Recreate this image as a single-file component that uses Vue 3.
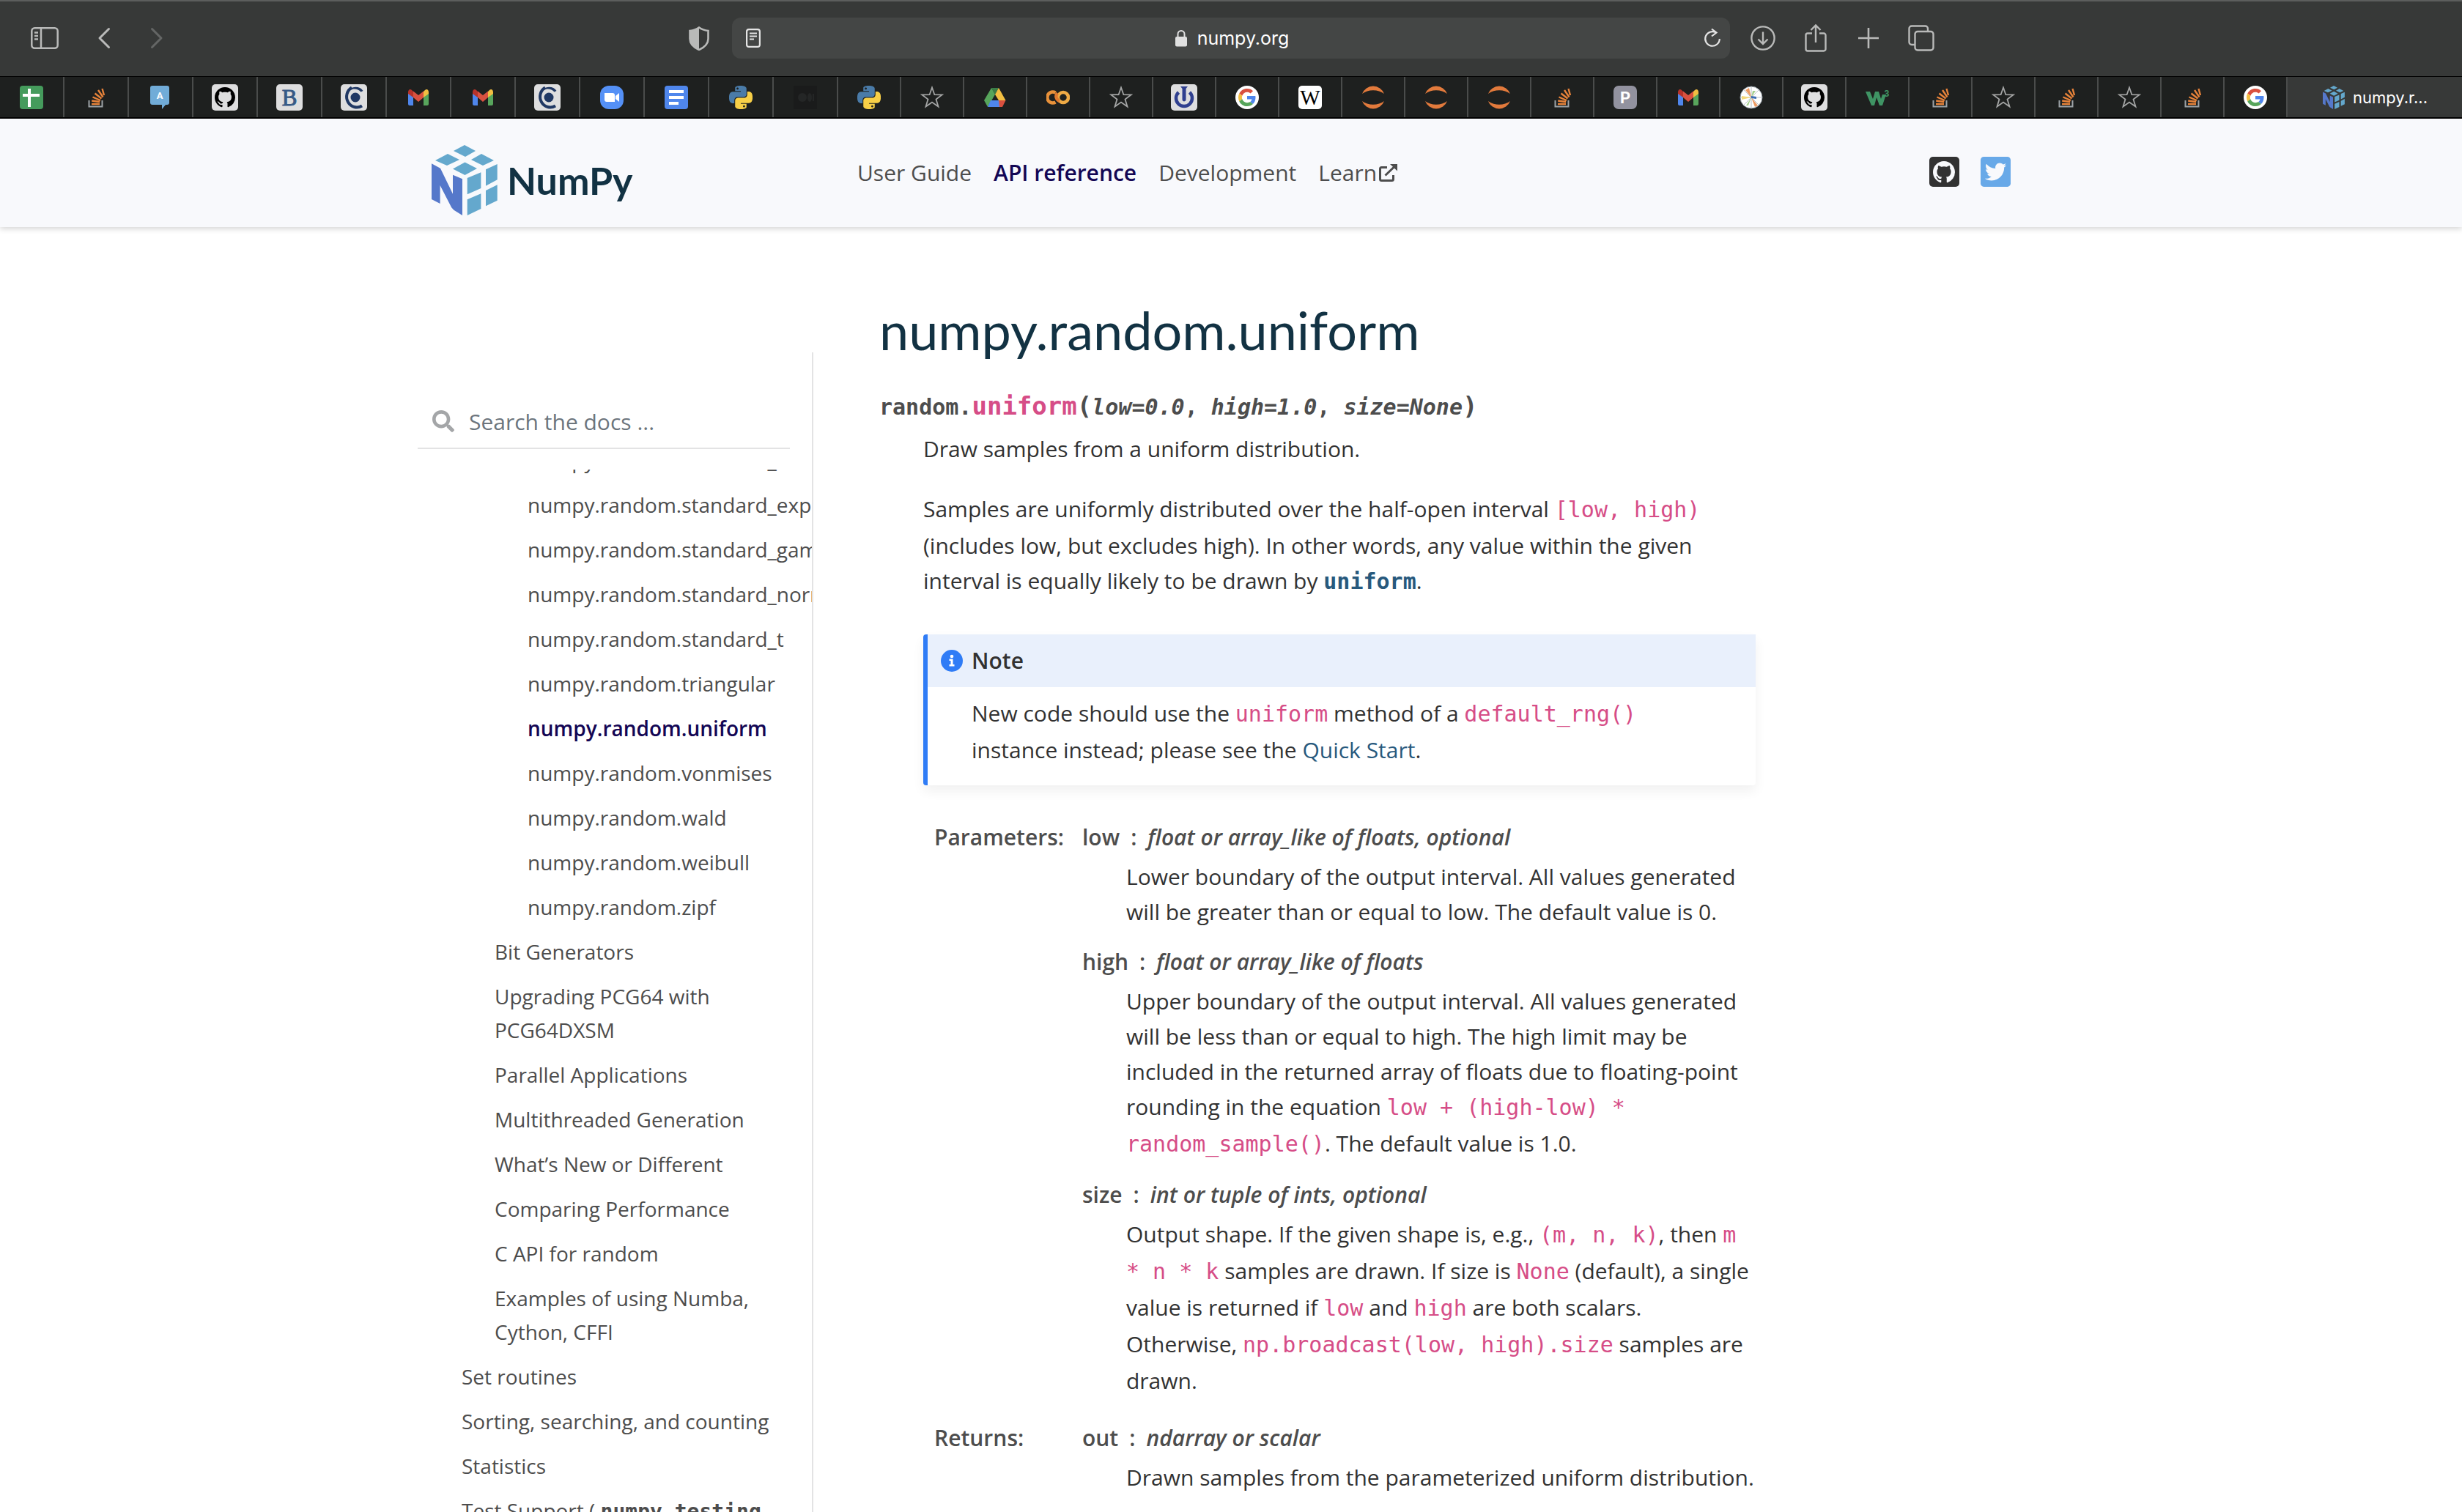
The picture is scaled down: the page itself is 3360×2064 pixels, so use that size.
<script setup>
import { ref } from 'vue'

const search = ref('')

const wideTabs = ['sheets', 'stack', 'chat', 'github', 'b', 'co', 'gmail', 'gmail', 'co', 'zoom', 'docs', 'python', 'dim']
const narrowTabs = [
  'python', 'star', 'drive', 'colab', 'star', 'power', 'google', 'wiki', 'jupyter', 'jupyter', 'jupyter', 'stack',
  'p', 'gmail', 'mpl', 'github', 'w3', 'stack', 'star', 'stack', 'star', 'stack', 'google',
]

const functions = [
  'standard_cauchy', 'standard_exponential', 'standard_gamma', 'standard_normal', 'standard_t', 'triangular',
  'uniform', 'vonmises', 'wald', 'weibull', 'zipf',
]
const randomPages = [
  'Bit Generators', 'Upgrading PCG64 with PCG64DXSM', 'Parallel Applications', 'Multithreaded Generation',
  'What’s New or Different', 'Comparing Performance', 'C API for random', 'Examples of using Numba, Cython, CFFI',
]
const routines = ['Set routines', 'Sorting, searching, and counting', 'Statistics']
</script>

<template>
  <div class="window">
    <svg class="sprite" aria-hidden="true">
      <symbol id="sheets" viewBox="0 0 32 32"><rect width="32" height="32" rx="4" fill="#459b5c" /><path d="M11 4h4v7h12v4H15v14h-4V15H4v-4h7z" fill="#fff" /></symbol>
      <symbol id="stack" viewBox="0 0 32 32"><path d="M6.500 20v8.500h18V20" fill="none" stroke="#9da3a8" stroke-width="2" /><path d="M10 25h11M10.200 20.500l11 1.500M11.500 15.500l10.500 4.500M14.500 10.500l9 7M19 6l6.500 9.500M24.500 4l2.500 9" fill="none" stroke="#e8833a" stroke-width="2.400" /></symbol>
      <symbol id="chat" viewBox="0 0 32 32"><path d="M5 0h20a3 3 0 0 1 3 3v20a3 3 0 0 1-3 3h-2l-5 6v-6H5a3 3 0 0 1-3-3V3a3 3 0 0 1 3-3z" fill="#71acd8" /><text x="15" y="18" text-anchor="middle" font-family="Roboto, sans-serif" font-weight="700" font-size="13" fill="#fff">A</text></symbol>
      <symbol id="mark" viewBox="0 0 16 16"><path d="M8 0C3.580 0 0 3.580 0 8c0 3.540 2.290 6.530 5.470 7.590.4.070.550-.170.550-.380 0-.190-.010-.820-.010-1.490-2.010.370-2.530-.490-2.690-.940-.090-.230-.480-.940-.820-1.130-.280-.150-.680-.520-.010-.530.630-.010 1.080.580 1.230.820.720 1.210 1.870.870 2.330.660.070-.520.280-.870.510-1.070-1.780-.2-3.640-.890-3.640-3.950 0-.870.310-1.590.820-2.150-.080-.2-.360-1.020.080-2.120 0 0 .670-.210 2.200.820.640-.180 1.320-.270 2-.270s1.360.090 2 .270c1.530-1.040 2.200-.820 2.200-.820.440 1.100.160 1.920.080 2.120.510.560.820 1.270.820 2.150 0 3.070-1.870 3.750-3.650 3.950.290.250.540.730.540 1.480 0 1.070-.010 1.930-.010 2.200 0 .210.150.460.550.380A8.010 8.010 0 0 0 16 8c0-4.420-3.580-8-8-8z" /></symbol>
      <symbol id="github" viewBox="0 0 36 36"><rect width="36" height="36" rx="5" fill="#dededf" /><use href="#mark" x="4" y="4" width="28" height="28" fill="#000" /></symbol>
      <symbol id="b" viewBox="0 0 36 36"><rect width="36" height="36" rx="5" fill="#dededf" /><text x="18" y="29" text-anchor="middle" font-family="Liberation Serif, serif" font-size="31" fill="#375a86" stroke="#375a86">B</text></symbol>
      <symbol id="co" viewBox="0 0 36 36"><rect width="36" height="36" rx="5" fill="#dededf" /><path d="M29 29.500a13.500 14 0 0 1-14-25" fill="none" stroke="#203864" stroke-width="4" /><path d="M12 6.500C18 2 27 3 30.500 9l-3 1.500C24 6.500 18 5 13 8z" fill="#203864" /><circle cx="20" cy="18" r="6.500" fill="#203864" /></symbol>
      <symbol id="gmail" viewBox="0 0 32 32"><path d="M2 9v16a2 2 0 0 0 2 2h5V14z" fill="#4f86ec" /><path d="M30 9v16a2 2 0 0 1-2 2h-5V14z" fill="#58a55c" /><path d="M23 8v8l7-5V9c0-4-3-5-5-3z" fill="#f1be42" /><path d="M9 8v8l-7-5V9c0-4 3-5 5-3z" fill="#b8332a" /><path d="M9 7.500l7 5.500 7-5.500V16l-7 6-7-6z" fill="#d95140" /></symbol>
      <symbol id="zoom" viewBox="0 0 32 32"><rect width="32" height="32" rx="12" fill="#5490f6" /><path d="M6 10h11a3 3 0 0 1 3 3v9H9a3 3 0 0 1-3-3zM21 14l5-4v12l-5-4z" fill="#fff" /></symbol>
      <symbol id="docs" viewBox="0 0 32 32"><rect width="32" height="32" rx="4" fill="#4f86ec" /><path d="M6 6h20v4H6zM6 14h20v4H6zM6 22h13v4H6z" fill="#fff" /></symbol>
      <symbol id="python" viewBox="0 0 24 24">
        <path fill="#4a7ba8" d="M14.250.180l.9.2.730.260.590.3.450.320.340.340.250.340.160.330.1.3.040.260.020.2-.010.130V8.500l-.050.630-.130.550-.210.460-.260.380-.3.310-.330.250-.350.190-.350.140-.330.1-.3.070-.260.040-.210.020H8.770l-.690.050-.590.140-.5.220-.410.270-.330.320-.270.350-.2.360-.150.370-.1.350-.070.320-.040.270-.020.210v3.060H3.170l-.210-.030-.280-.070-.320-.120-.350-.180-.360-.260-.360-.360-.350-.460-.320-.590-.280-.730-.210-.880-.140-1.050-.050-1.230.060-1.220.160-1.040.240-.870.320-.710.360-.570.4-.440.420-.330.420-.240.4-.160.360-.1.320-.050.240-.010h.160l.060.010h8.160v-.830H6.180l-.010-2.750-.020-.370.050-.340.110-.310.170-.280.250-.260.310-.230.380-.2.440-.180.510-.150.580-.120.640-.1.710-.060.770-.040.840-.020 1.270.050zm-6.300 1.980l-.230.330-.080.410.080.410.230.340.330.220.410.090.410-.090.330-.220.230-.340.080-.410-.080-.410-.230-.330-.330-.220-.410-.090-.410.090z" />
        <path fill="#f7cf47" d="M21.040 6.110l.280.060.320.120.350.180.360.270.360.350.350.470.320.590.280.730.210.880.140 1.040.050 1.230-.060 1.230-.160 1.040-.240.860-.320.710-.360.570-.4.450-.420.330-.420.240-.4.160-.360.090-.320.050-.240.020-.160-.010h-8.220v.820h5.840l.010 2.760.020.360-.050.340-.110.310-.170.290-.250.250-.310.240-.380.2-.440.170-.510.150-.580.130-.640.090-.710.070-.770.040-.840.010-1.270-.040-1.070-.140-.9-.2-.730-.250-.590-.3-.450-.330-.340-.340-.250-.340-.160-.330-.1-.3-.040-.250-.020-.2.010-.130v-5.340l.050-.640.130-.540.210-.460.260-.380.3-.320.330-.240.350-.2.350-.140.330-.1.3-.060.260-.040.210-.020.130-.010h5.840l.690-.050.590-.140.5-.210.410-.280.330-.320.270-.350.2-.360.150-.360.1-.350.070-.320.040-.280.020-.210V6.070h2.090l.140.010zm-6.470 14.250l-.230.330-.080.410.080.410.230.330.330.230.410.080.410-.080.330-.230.230-.330.080-.410-.080-.410-.230-.330-.330-.230-.410-.080-.410.080z" />
      </symbol>
      <symbol id="dim" viewBox="0 0 32 32"><rect width="32" height="32" fill="#1a1b1b" /><g fill="#242626"><circle cx="12" cy="16" r="6" /><ellipse cx="22" cy="16" rx="3" ry="6" /><rect x="26" y="11" width="2" height="10" /></g></symbol>
      <symbol id="star" viewBox="0 0 32 32"><path d="M16 2.500l3.400 9.700 10.200.2-8.100 6.200 3 9.900-8.500-5.900-8.500 5.900 3-9.900-8.100-6.200 10.200-.2z" fill="none" stroke="#a5a6a6" stroke-width="1.800" /></symbol>
      <symbol id="drive" viewBox="0 0 32 32"><path d="M11 3h10l-5 9z" fill="#3a7d46" /><path d="M11 3l5 9-10 17-5-9z" fill="#57a55b" /><path d="M21 3l9.500 17H21L16 12z" fill="#f3bf42" /><path d="M10 20h12v9H6z" fill="#4f86ec" /><path d="M21 20h9.500L26 29h-4z" fill="#d9503f" /></symbol>
      <symbol id="colab" viewBox="0 0 32 32" fill="none" stroke-width="4.500"><path d="M12.500 9.500a7.500 7.500 0 1 0 0 13" stroke="#e8913a" /><circle cx="23" cy="16" r="7" stroke="#efaa45" /><path d="M15 10a7 7 0 0 0 3 11" stroke="#e0792f" /></symbol>
      <symbol id="power" viewBox="0 0 36 36"><rect width="36" height="36" rx="5" fill="#dededf" /><path d="M10.500 11a11 11 0 1 0 15 0" fill="none" stroke="#2f3f8f" stroke-width="4.500" /><path d="M13 3h10l-2.500 3v15a2.500 2.500 0 0 1-5 0V6z" fill="#2f3f8f" /></symbol>
      <symbol id="google" viewBox="0 0 32 32">
        <circle cx="16" cy="16" r="16" fill="#fff" />
        <svg x="4" y="4" width="24" height="24" viewBox="0 0 48 48">
          <path fill="#d9503f" d="M24 9.500c3.540 0 6.710 1.220 9.210 3.600l6.850-6.850C35.900 2.380 30.470 0 24 0 14.620 0 6.510 5.380 2.560 13.220l7.980 6.190C12.430 13.720 17.740 9.500 24 9.500z" />
          <path fill="#4f86ec" d="M46.980 24.550c0-1.570-.150-3.090-.380-4.550H24v9.020h12.940c-.580 2.960-2.260 5.480-4.780 7.180l7.730 6c4.510-4.180 7.090-10.360 7.090-17.650z" />
          <path fill="#f3bf42" d="M10.530 28.590c-.480-1.450-.760-2.990-.760-4.590s.270-3.140.760-4.590l-7.980-6.190C.920 16.460 0 20.120 0 24c0 3.880.920 7.540 2.560 10.780l7.970-6.190z" />
          <path fill="#57a55b" d="M24 48c6.480 0 11.930-2.130 15.890-5.810l-7.730-6c-2.150 1.450-4.920 2.300-8.160 2.300-6.260 0-11.570-4.220-13.470-9.910l-7.980 6.190C6.510 42.620 14.620 48 24 48z" />
        </svg>
      </symbol>
      <symbol id="wiki" viewBox="0 0 32 32"><rect width="32" height="32" rx="5" fill="#fff" /><text x="16" y="26" text-anchor="middle" font-family="Liberation Serif, serif" font-size="29" fill="#000">W</text></symbol>
      <symbol id="jupyter" viewBox="0 0 32 32" fill="#e27a3c"><path d="M1 11a16 16 0 0 1 30 0a22 18 0 0 0-30 0z" /><path d="M1 21a16 16 0 0 0 30 0a22 18 0 0 1-30 0z" /></symbol>
      <symbol id="p" viewBox="0 0 32 32"><rect width="32" height="32" rx="7" fill="#92929f" /><text x="16" y="24" text-anchor="middle" font-family="Roboto, sans-serif" font-weight="700" font-size="22" fill="#fff">P</text></symbol>
      <symbol id="mpl" viewBox="0 0 32 32"><circle cx="16" cy="16" r="15" fill="#fff" stroke="#8a949c" /><path d="M16 1v30M1 16h30M5 5l22 22M27 5L5 27" stroke="#b9c0c6" /><path d="M16 16L8 6l5-3zM16 16l9 11-4 2z" fill="#ee9b63" /><path d="M16 16L3 14v5z" fill="#f4d97b" /><path d="M16 16l-4 11h-3zM16 16l2-9h4z" fill="#a4cf8e" /><path d="M16 14l7 1v3l-7-1z" fill="#3b6db4" /></symbol>
      <symbol id="w3" viewBox="0 0 32 32"><path d="M0 8h6l4 10 3-10h5l3 10 2-6h5l-5 15h-4l-4-11-3 11H8z" fill="#3f9464" /><text x="29" y="15" text-anchor="middle" font-family="Roboto, sans-serif" font-weight="700" font-size="12" fill="#3f9464">3</text></symbol>
      <symbol id="cube" viewBox="0 0 90 96">
        <path fill="#64a8cd" d="M45 0l15 8-14 8-16-8zM22 12l16 8-17 8-16-7zM68 12l17 9-15 7-16-8zM45.500 23.500L62 32l-16.500 9L29 32.500zM48.700 45l18.700-7.700V59l-18.700 8.300zM74 33.300L89.700 26v21.300L74 55.700zM48.700 74.300l18.700-8V87l-18.700 9zM74 62l15.700-7.700v21.400L74 83.300z" />
        <path fill="#5578ca" d="M0 25.300l12 6.400 17 35v-26l13 5.600V96l-11.600-7.300-3.200-3.400L11.600 55v25L0 74z" />
      </symbol>
    </svg>

    <header class="chrome">
      <div class="toolbar">
        <div class="tools-left">
          <button class="tool sidebar-toggle" aria-label="Show sidebar">
            <svg width="38" height="30" viewBox="0 0 38 30" fill="none" stroke="currentColor" stroke-width="2.500"><rect x="1.300" y="1.300" width="35.400" height="27.400" rx="4" /><path d="M14 1v28M5 7.500h5M5 12h5M5 16.500h5" /></svg>
          </button>
          <button class="tool step" aria-label="Back">
            <svg width="18" height="30" viewBox="0 0 18 30" fill="none" stroke="currentColor" stroke-width="3" stroke-linecap="round" stroke-linejoin="round"><path d="M15.500 2.500L3 15l12.500 12.500" /></svg>
          </button>
          <button class="tool step faded" aria-label="Forward">
            <svg width="18" height="30" viewBox="0 0 18 30" fill="none" stroke="currentColor" stroke-width="3" stroke-linecap="round" stroke-linejoin="round"><path d="M2.500 2.500L15 15 2.500 27.500" /></svg>
          </button>
          <button class="tool shield" aria-label="Privacy report">
            <svg width="28" height="33" viewBox="0 0 28 33"><path d="M14 1.500c4 3 8 4 12.500 4.500v11c0 8-6 12-12.500 15C7.500 29 1.500 25 1.500 17V6C6 5.500 10 4.500 14 1.500z" fill="none" stroke="currentColor" stroke-width="2.600" /><path d="M14 1.500V32C7.500 29 1.500 25 1.500 17V6C6 5.500 10 4.500 14 1.500z" fill="currentColor" /></svg>
          </button>
        </div>
        <div class="address">
          <svg width="20" height="26" viewBox="0 0 20 26" fill="none" stroke="currentColor" stroke-width="2.200"><rect x="1.100" y="1.100" width="17.800" height="23.800" rx="3" /><path d="M5 6.500h10M5 10.500h10M5 14.500h6" /></svg>
          <span class="site">
            <svg width="16" height="24" viewBox="0 0 16 24"><path d="M3.500 11V6.500a4.500 4.500 0 0 1 9 0V11" fill="none" stroke="currentColor" stroke-width="2" /><rect y="10" width="16" height="13.500" rx="2" fill="currentColor" /></svg>
            numpy.org
          </span>
          <button class="tool bright" aria-label="Reload">
            <svg width="24" height="28" viewBox="0 0 24 28" fill="none" stroke="currentColor" stroke-width="2.200"><path d="M17 6.500A9.800 9.800 0 1 0 21.800 15M11 1.500l6.500 5-6.500 5" /></svg>
          </button>
        </div>
        <div class="tools-right">
          <button class="tool action" aria-label="Downloads">
            <svg width="34" height="34" viewBox="0 0 34 34" fill="none" stroke="currentColor" stroke-width="2.400"><circle cx="17" cy="17" r="15.600" /><path d="M17 8.500V25M10.500 18.500L17 25l6.500-6.500" /></svg>
          </button>
          <button class="tool action" aria-label="Share">
            <svg width="30" height="40" viewBox="0 0 30 40" fill="none" stroke="currentColor" stroke-width="2.400"><path d="M10 13.500H4a2.500 2.500 0 0 0-2.500 2.500v19A2.500 2.500 0 0 0 4 37.500h22a2.500 2.500 0 0 0 2.500-2.500V16a2.500 2.500 0 0 0-2.500-2.500h-6M15 26V3M8.500 9L15 2.500 21.500 9" /></svg>
          </button>
          <button class="tool action" aria-label="New tab">
            <svg width="28" height="28" viewBox="0 0 28 28" fill="none" stroke="currentColor" stroke-width="2.600"><path d="M14 0v28M0 14h28" /></svg>
          </button>
          <button class="tool action" aria-label="Tab overview">
            <svg width="36" height="36" viewBox="0 0 36 36" fill="none" stroke="currentColor" stroke-width="2.400"><path d="M9.500 27H5a3.500 3.500 0 0 1-3.500-3.500V5A3.500 3.500 0 0 1 5 1.500h18.500A3.500 3.500 0 0 1 27 5v4" /><rect x="9.500" y="9" width="25" height="25.500" rx="3.500" /></svg>
          </button>
        </div>
      </div>
      <nav class="tabs" aria-label="Tabs">
        <button v-for="(icon, i) in wideTabs" :key="'a' + i" class="tab wide" :aria-label="icon">
          <svg :class="['favicon', { plate: ['github', 'b', 'co'].includes(icon) }]"><use :href="'#' + icon" /></svg>
        </button>
        <button v-for="(icon, i) in narrowTabs" :key="'b' + i" class="tab" :aria-label="icon">
          <svg :class="['favicon', { plate: ['github', 'power'].includes(icon) }]"><use :href="'#' + icon" /></svg>
        </button>
        <button class="tab active"><svg class="favicon"><use href="#cube" /></svg>numpy.r...</button>
      </nav>
    </header>

    <div class="page">
      <header class="navbar">
        <div class="container navbar-inner">
          <a href="#" class="brand"><svg width="90" height="96"><use href="#cube" /></svg>NumPy</a>
          <nav class="links">
            <a href="#">User Guide</a>
            <a href="#" class="current">API reference</a>
            <a href="#">Development</a>
            <a href="#" class="external">Learn<svg width="25" height="24" viewBox="0 0 25 24" fill="none" stroke="currentColor" stroke-width="3"><path d="M11 4.500H3.500a2 2 0 0 0-2 2v14a2 2 0 0 0 2 2h14a2 2 0 0 0 2-2V15M8.500 15.500L21 3.500" /><path d="M15 0h10v9.500z" fill="currentColor" stroke="none" /></svg></a>
          </nav>
          <div class="social">
            <a href="#" aria-label="GitHub"><svg width="41" height="41" viewBox="0 0 41 41"><rect width="41" height="41" rx="5" fill="#323232" /><use href="#mark" x="5" y="6" width="30" height="30" fill="#f8f9fc" /></svg></a>
            <a href="#" aria-label="Twitter"><svg width="41" height="41" viewBox="0 32 448 448"><path fill="#68a9e8" d="M400 32H48C21.500 32 0 53.500 0 80v352c0 26.500 21.500 48 48 48h352c26.500 0 48-21.500 48-48V80c0-26.500-21.500-48-48-48zm-48.900 158.800c.2 2.800.2 5.700.2 8.500 0 86.700-66 186.600-186.600 186.600-37.200 0-71.700-10.800-100.700-29.400 5.300.6 10.400.8 15.800.8 30.700 0 58.900-10.400 81.400-28-28.800-.6-53-19.500-61.300-45.500 10.100 1.500 19.200 1.500 29.600-1.200-30-6.100-52.500-32.500-52.500-64.400v-.8c8.700 4.900 18.900 7.900 29.600 8.300a65.447 65.447 0 0 1-29.200-54.600c0-12.200 3.200-23.400 8.900-33.100 32.300 39.800 80.800 65.800 135.200 68.600-9.300-44.500 24-80.600 64-80.600 18.900 0 35.900 7.900 47.900 20.700 14.800-2.800 29-8.300 41.600-15.800-4.900 15.200-15.200 28-28.800 36.100 13.200-1.400 26-5.100 37.800-10.200-8.900 13.100-20.100 24.700-32.900 34z" /></svg></a>
          </div>
        </div>
      </header>

      <div class="container body">
        <aside class="sidebar">
          <form class="search" role="search" @submit.prevent>
            <label for="q" aria-label="Search the docs"><svg width="30" height="30" viewBox="0 0 512 512" fill="#a4a6a8"><path d="M505 442.700L405.300 343c-4.500-4.500-10.600-7-17-7H372c27.600-35.300 44-79.700 44-128C416 93.100 322.900 0 208 0S0 93.100 0 208s93.100 208 208 208c48.300 0 92.700-16.400 128-44v16.300c0 6.400 2.500 12.500 7 17l99.700 99.700c9.400 9.400 24.600 9.400 33.900 0l28.300-28.300c9.400-9.400 9.400-24.600.1-34zM208 336c-70.700 0-128-57.200-128-128 0-70.700 57.200-128 128-128 70.700 0 128 57.200 128 128 0 70.700-57.200 128-128 128z" /></svg></label>
            <input id="q" v-model="search" type="text" placeholder="Search the docs ..." />
          </form>
          <nav class="toc" aria-label="Section navigation">
            <ul class="toc-list">
              <li v-for="f in functions" :key="f" class="deep"><a href="#" :class="{ current: f === 'uniform' }">numpy.random.{{ f }}</a></li>
              <li v-for="p in randomPages" :key="p" class="mid"><a href="#">{{ p }}</a></li>
              <li v-for="r in routines" :key="r"><a href="#">{{ r }}</a></li>
              <li><a href="#">Test Support ( <code>numpy.testing</code><br />)</a></li>
            </ul>
          </nav>
        </aside>

        <main class="content">
          <h1>numpy.random.uniform</h1>
          <p class="signature">random.<span class="name">uniform</span><span class="paren">(</span><em>low=0.0</em>, <em>high=1.0</em>, <em>size=None</em><span class="paren">)</span></p>
          <div class="description">
            <p>Draw samples from a uniform distribution.</p>
            <p>Samples are uniformly distributed over the half-open interval <code>[low, high)</code> (includes low, but excludes high). In other words, any value within the given interval is equally likely to be drawn by <a href="#"><code class="ref">uniform</code></a>.</p>

            <section class="note">
              <h2><svg width="30" height="30" viewBox="0 0 30 30"><circle cx="15" cy="15" r="15" fill="#2f7cf6" /><circle cx="15" cy="9" r="2.300" fill="#fff" /><path d="M11.500 12.500h5v7.500h2v2.500h-7V20h2v-5h-2z" fill="#fff" /></svg>Note</h2>
              <p>New code should use the <code>uniform</code> method of a <code>default_rng()</code> instance instead; please see the <a href="#">Quick Start</a>.</p>
            </section>

            <dl class="fields">
              <dt>Parameters:</dt>
              <dd>
                <dl class="params">
                  <dt>low<span class="type">float or array_like of floats, optional</span></dt>
                  <dd>Lower boundary of the output interval. All values generated will be greater than or equal to low. The default value is 0.</dd>
                  <dt>high<span class="type">float or array_like of floats</span></dt>
                  <dd>Upper boundary of the output interval. All values generated will be less than or equal to high. The high limit may be included in the returned array of floats due to floating-point rounding in the equation <code>low + (high-low) * random_sample()</code>. The default value is 1.0.</dd>
                  <dt>size<span class="type">int or tuple of ints, optional</span></dt>
                  <dd>Output shape. If the given shape is, e.g., <code>(m, n, k)</code>, then <code>m * n * k</code> samples are drawn. If size is <code>None</code> (default), a single value is returned if <code>low</code> and <code>high</code> are both scalars. Otherwise, <code>np.broadcast(low, high).size</code> samples are drawn.</dd>
                </dl>
              </dd>
              <dt>Returns:</dt>
              <dd>
                <dl class="params">
                  <dt>out<span class="type">ndarray or scalar</span></dt>
                  <dd>Drawn samples from the parameterized uniform distribution.</dd>
                </dl>
              </dd>
            </dl>
          </div>
        </main>
      </div>
    </div>
  </div>
</template>

<style>
body {
  margin: 0;
  background: #fff;
}
</style>

<style scoped>
.window {
  display: flex;
  flex-direction: column;
  height: 100vh;
  overflow: hidden;
  background: #fff;
  color: #323232;
  font: 30px/48px "Open Sans", sans-serif;
}
svg {
  display: block;
  flex: none;
}
.sprite {
  display: none;
}
a {
  color: #27597d;
  text-decoration: none;
}
button {
  display: flex;
  align-items: center;
  justify-content: center;
  margin: 0;
  padding: 0;
  border: 0;
  background: none;
  color: inherit;
  font: inherit;
}
h1, h2, p, dl, dd, ul {
  margin: 0;
  padding: 0;
}

/* Browser chrome */
.chrome {
  flex: none;
  background: #373938;
  border-bottom: 2px solid #000;
  font-family: Inter, sans-serif;
}
.toolbar {
  display: grid;
  grid-template-columns: minmax(0, 1fr) 1362px minmax(0, 1fr);
  align-items: center;
  height: 100px;
  padding-bottom: 2px;
  border-top: 2px solid #5c5e5d;
}
.tool {
  color: #b9bab9;
}
.tools-left {
  display: flex;
  gap: 40px;
  padding: 0 31px 0 42px;
}
.sidebar-toggle {
  width: 44px;
  justify-content: flex-start;
}
.step {
  width: 32px;
}
.faded {
  color: #646665;
}
.shield {
  margin-left: auto;
}
.address {
  display: flex;
  align-items: center;
  justify-content: space-between;
  height: 56px;
  padding: 0 12px 0 19px;
  border-radius: 12px;
  background: #444645;
  color: #e4e4e4;
}
.bright {
  color: #e4e4e4;
}
.site {
  display: flex;
  align-items: center;
  gap: 14px;
  color: #fff;
  font-size: 25px;
}
.site svg {
  color: #e0e0e0;
}
.tools-right {
  display: flex;
  gap: 36px;
  padding-left: 27px;
}
.action {
  width: 36px;
}
.tabs {
  display: flex;
  height: 56px;
  border-top: 1px solid #000;
  box-sizing: border-box;
}
.tab {
  flex: 0 1 86px;
  min-width: 0;
  box-sizing: border-box;
  border-right: 2px solid #4a4c4b;
  background: #1e201f;
}
.tab.wide {
  flex-basis: 88px;
}
.tab.active {
  flex: 1 0 200px;
  gap: 10px;
  border: 0;
  background: #373938;
  color: #fff;
  font-size: 22px;
}
.favicon {
  width: 32px;
  height: 32px;
}
.favicon.plate {
  width: 36px;
  height: 36px;
}

/* Site header */
.page {
  display: flex;
  flex-direction: column;
  flex: 1;
  min-height: 0;
}
.container {
  width: 100%;
  max-width: 2240px;
  margin: 0 auto;
  box-sizing: border-box;
}
.navbar {
  position: relative;
  flex: none;
  background: #f8f9fc;
  box-shadow: 0 2px 8px rgba(0, 0, 0, 0.18);
}
.navbar-inner {
  display: flex;
  align-items: center;
  height: 148px;
  padding: 0 56px 0 29px;
}
.brand {
  display: flex;
  align-items: center;
  gap: 13px;
  width: 581px;
  padding-top: 20px;
  color: #123243;
  font: 700 52px/96px Lato, sans-serif;
}
.links {
  display: flex;
  gap: 30px;
}
.links a {
  color: #4d4d4d;
}
.links .current,
.toc .current {
  color: #130654;
  font-weight: 600;
}
.external {
  display: flex;
  align-items: center;
  gap: 3px;
}
.social {
  display: flex;
  gap: 29px;
  margin-left: auto;
  padding-bottom: 4px;
}

/* Section navigation */
.body {
  display: flex;
  flex: 1;
  min-height: 0;
}
.sidebar {
  display: flex;
  flex-direction: column;
  flex: none;
  width: 550px;
  box-sizing: border-box;
  margin-top: 171px;
  padding-top: 64px;
  border-right: 2px solid #e3e3e4;
}
.search {
  display: flex;
  align-items: center;
  gap: 20px;
  margin: 0 30px 28px 10px;
  padding: 0 20px 6px;
  border-bottom: 2px solid #e3e3e4;
}
.search input {
  flex: 1;
  min-width: 0;
  height: 60px;
  padding: 0;
  border: 0;
  outline: 0;
  background: none;
  color: #323232;
  font: inherit;
}
.search input::placeholder {
  color: #6c757d;
  opacity: 1;
}
.toc {
  flex: 1;
  min-height: 0;
  overflow: hidden;
}
.toc-list {
  margin-top: -43px;
  padding: 0 30px 0 70px;
  list-style: none;
  font-size: 28px;
  line-height: 46px;
}
.toc li {
  padding: 7px 0 8px;
}
.toc .mid {
  padding-left: 45px;
}
.toc .deep {
  padding-left: 90px;
  white-space: nowrap;
}
.toc a {
  color: #4d4d4d;
}
.toc code {
  color: inherit;
  font-size: 28px;
  font-weight: 700;
  line-height: 46px;
}

/* Article */
.content {
  flex: 1;
  min-width: 0;
  padding: 95px 404px 0 90px;
  overflow: hidden;
}
h1 {
  color: #123243;
  font: 400 72px/90px Lato, sans-serif;
}
code,
.signature {
  font-family: "DejaVu Sans Mono", "Liberation Mono", monospace;
}
code {
  color: #d64d87;
  font-size: 30px;
  line-height: 50px;
}
.signature {
  margin-top: 35px;
  color: #4d4d4d;
  font-weight: 700;
  white-space: nowrap;
}
.signature .name {
  color: #d64d87;
  font-size: 34px;
}
.signature .paren {
  font-size: 34px;
}
.description {
  padding: 9px 0 0 60px;
}
.description > p {
  margin-bottom: 34px;
}
code.ref {
  color: #27597d;
  font-weight: 700;
}
.note {
  margin: 47px 0;
  border-left: 6px solid #2f7cf6;
  border-radius: 4px;
  box-shadow: 0 8px 16px rgba(0, 0, 0, 0.06);
}
.note h2 {
  display: flex;
  align-items: center;
  gap: 12px;
  padding: 12px 18px;
  background: #e9f0fc;
  font-size: 30px;
  font-weight: 600;
  line-height: 48px;
}
.note p {
  padding: 12px 60px 24px;
}
.fields {
  display: grid;
  grid-template-columns: 202px minmax(0, 1fr);
  row-gap: 30px;
  padding-left: 15px;
}
dt {
  color: #4d4d4d;
  font-weight: 600;
}
.params dd {
  padding: 6px 0 0 60px;
}
.params dd + dt {
  margin-top: 20px;
}
.type {
  font-style: italic;
}
.type::before {
  content: ":";
  margin: 0 15px;
  font-style: normal;
}
</style>
